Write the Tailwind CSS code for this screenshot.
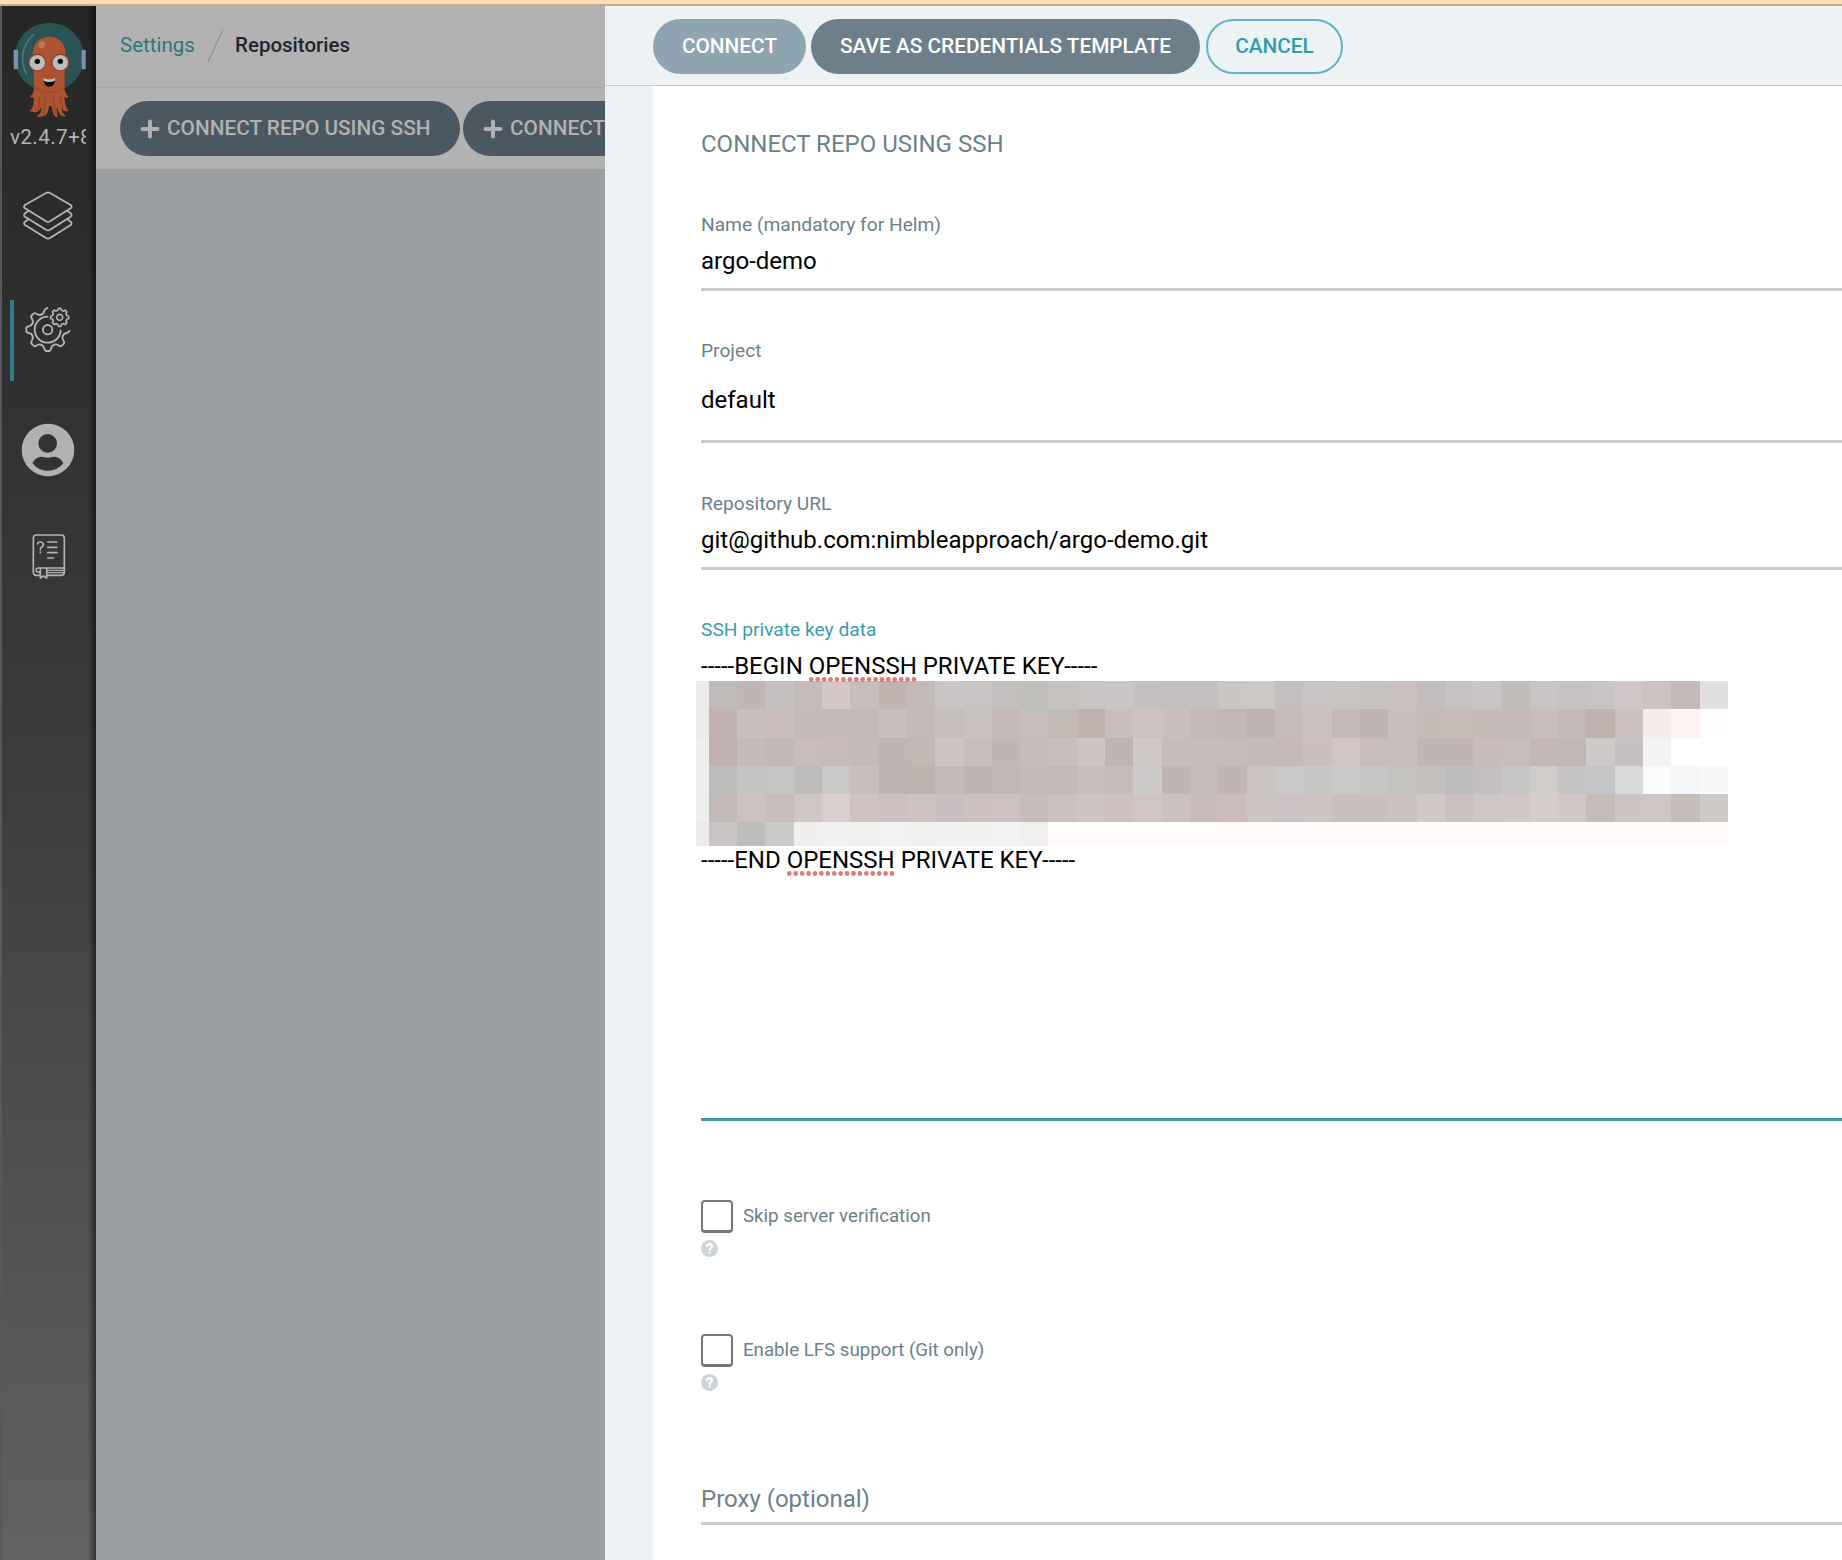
<!DOCTYPE html>
<html lang="en">
<head>
<meta charset="utf-8">
<title>Repositories</title>
<script src="https://cdn.jsdelivr.net/npm/@tailwindcss/browser@4"></script>
</head>
<body class="flex h-[1560px] w-[1842px] flex-col overflow-hidden bg-white font-[Roboto,sans-serif] text-black">
<div class="h-[6px] shrink-0 border-b-2 border-[#c9ad8b] bg-[#ffdeb6]"></div>
<div class="flex min-h-0 flex-1">

  <!-- Sidebar -->
  <nav class="relative flex w-[96px] shrink-0 flex-col border-l-2 border-[#585858] bg-linear-to-b from-[#262626] from-0% via-[#3a3a3a] via-45% to-[#626262] to-100%">
    <svg class="ml-[8px] mt-[14px] h-[100px] w-[80px] shrink-0" viewBox="30 60 240 300">
      <circle cx="148" cy="172" r="104" fill="#2b5254"/>
      <path d="M100 104C65 138 60 180 78 220" fill="none" stroke="#47796f" stroke-width="6" stroke-linecap="round"/>
      <rect x="41" y="149" width="13" height="59" rx="3" fill="#7c93a9"/>
      <rect x="245" y="149" width="12" height="59" rx="3" fill="#7c93a9"/>
      <path d="M98 165C98 130 118 110 148 110C178 110 197 130 197 165L194 225V268C197 280 200 288 206 290C202 295 196 294 193 291C195 308 197 327 207 330C198 338 188 334 184 322C185 333 190 345 199 347C188 353 177 348 171 320C170 334 171 346 175 349C165 354 158 345 155 318H147C145 340 140 354 107 349C122 345 125 330 124 320C120 335 108 341 87 333C98 329 103 310 101 291C98 294 93 294 89 289C97 286 100 280 102 268V225Z" fill="#ac5331"/>
      <path d="M103 260Q148 296 194 260" fill="none" stroke="#9c4529" stroke-width="3"/>
      <path d="M118 290Q120 315 112 332M136 290Q136 330 130 342M160 290Q162 330 168 342M180 290Q182 310 190 325" fill="none" stroke="#8e3f25" stroke-width="3"/>
      <circle cx="126" cy="134" r="10" fill="#c0765e"/>
      <circle cx="112" cy="187" r="27" fill="#963f2a"/><circle cx="181" cy="187" r="27" fill="#963f2a"/>
      <circle cx="112" cy="188" r="23" fill="#bcbcbc"/><circle cx="181" cy="188" r="23" fill="#bcbcbc"/>
      <circle cx="112" cy="184" r="8" fill="#080808"/><circle cx="181" cy="184" r="8" fill="#080808"/>
      <path d="M129 233Q147 243 166 233Q164 260 148 260Q132 260 129 233Z" fill="#120a08"/>
      <path d="M129 233Q147 243 166 233L164 242Q147 250 131 242Z" fill="#c4c4c4"/>
    </svg>
    <div class="ml-[8px] mt-[4px] w-[76px] overflow-hidden whitespace-nowrap text-[20.8px] leading-[26px] tracking-[0.3px] text-[#b3b3b3]">v2.4.7+8</div>
    <svg class="ml-[18px] mt-[40px] h-[52px] w-[56px] shrink-0" viewBox="60 60 168 156" fill="none" stroke="#b4b4b4" stroke-width="5.4" stroke-linejoin="round" stroke-linecap="round">
      <path d="M138 69Q144 66 150 69L212 105Q218 110 212 115L150 154Q144 158 138 154L75 115Q69 110 75 105Z"/>
      <path d="M85 123L75 130Q69 135 75 140L138 179Q144 183 150 179L212 140Q218 135 212 130L203 123"/>
      <path d="M85 148L75 155Q69 160 75 165L138 204Q144 208 150 204L212 165Q218 160 212 155L203 148"/>
    </svg>
    <div class="mt-[58px] flex h-[81px] shrink-0 items-start">
      <div class="ml-[8px] h-[81px] w-[4px] bg-[#2d7c88]"></div>
      <svg class="ml-[8px] mt-[3px] h-[56px] w-[56px]" viewBox="66 400 168 168" fill="none" stroke="#b4b4b4" stroke-width="5.6" stroke-linejoin="round" stroke-linecap="round">
        <defs>
          <path id="cog" d="M-18.8-45.3C-12-48-11-50-10-57Q-9-64-4-64H4Q9-64 10-57C11-50 12-48 18.8-45.3"/>
          <path id="tooth" d="M-8.4-20.3L-5-21.5L-4-27H4L5-21.5L8.4-20.3"/>
        </defs>
        <g transform="translate(143 480)">
          <path d="M-18.8-45.3C-12-48-11-50-10-57Q-8-63-1-65"/>
          <use href="#cog" transform="rotate(-45)"/><use href="#cog" transform="rotate(-90)"/><use href="#cog" transform="rotate(-135)"/><use href="#cog" transform="rotate(180)"/><use href="#cog" transform="rotate(135)"/>
          <path d="M45.3 18.8C48 12 50 11 57 10Q64 8 65 4" />
          <path d="M0-39A39 39 0 1 0 39 3"/>
          <circle r="14"/>
        </g>
        <g transform="translate(179 443)" stroke-width="4.8">
          <use href="#tooth"/><use href="#tooth" transform="rotate(45)"/><use href="#tooth" transform="rotate(90)"/><use href="#tooth" transform="rotate(135)"/><use href="#tooth" transform="rotate(180)"/><use href="#tooth" transform="rotate(225)"/><use href="#tooth" transform="rotate(270)"/><use href="#tooth" transform="rotate(315)"/>
          <circle r="9"/>
        </g>
      </svg>
    </div>
    <svg class="ml-[19px] mt-[42px] h-[54px] w-[54px] shrink-0" viewBox="64 67 162 162">
      <circle cx="145" cy="148" r="79" fill="#b1b1b1"/>
      <circle cx="144" cy="128" r="28" fill="#323232"/>
      <path d="M98 187Q112 165 130 169Q144 173 158 169Q178 165 191 187Q174 210 144 210Q115 210 98 187Z" fill="#323232"/>
    </svg>
    <svg class="ml-[28px] mt-[56px] h-[48px] w-[38px] shrink-0" viewBox="90 400 114 144" fill="none" stroke="#b4b4b4" stroke-width="5" stroke-linejoin="round" stroke-linecap="round">
      <path d="M119 527H109Q100 527 100 517V415Q100 406 109 406H184Q193 406 193 415V518Q193 527 184 527H141"/>
      <path d="M193 505H115Q108 505 108 511Q108 517 115 517H119M141 512H191M141 519H191" stroke-width="4"/>
      <path d="M121 506V535L130 529L140 535V506"/>
      <path d="M113 433Q113 427 121 427Q130 427 130 435Q130 440 124 443Q121 445 121 450M121 457V459M143 427H171M143 443H171M143 459H171M143 475H160"/>
    </svg>
    <div class="absolute inset-y-0 right-0 w-[8px] bg-linear-to-r from-black/0 to-black/50"></div>
  </nav>

  <!-- Dimmed page -->
  <main class="w-[509px] shrink-0 overflow-hidden bg-[#9ba0a4]">
    <header class="flex h-[82px] items-start border-b border-[#a4a7ad] bg-[#b2b2b2] pl-[24px] text-[20.5px]">
      <a class="mt-[27px] w-[75px] leading-6 text-[#2c7680]">Settings</a>
      <svg class="ml-[11px] mt-[22px] h-[36px] w-[18px]" viewBox="0 0 18 36"><path d="M2 34L17 1" stroke="#8d9194" stroke-width="1.2"/></svg>
      <span class="ml-[11px] mt-[27px] font-medium leading-6 text-[#23242f]">Repositories</span>
    </header>
    <div class="flex h-[81px] w-[900px] gap-[3px] bg-[#b2b2b2] pl-[24px] pt-[13px] text-[20.8px] font-medium text-[#b0b2b5]">
      <div class="flex h-[55px] w-[340px] items-center rounded-full bg-[#4c5861] pl-[20px]">
        <svg class="h-[20px] w-[20px]" viewBox="0 0 20 20"><path d="M10 2.5V17.5M2.5 10H17.5" stroke="#b0b2b5" stroke-width="4" stroke-linecap="round"/></svg>
        <span class="ml-[7px] whitespace-nowrap">CONNECT REPO USING SSH</span>
      </div>
      <div class="flex h-[55px] w-[360px] items-center rounded-full bg-[#4c5861] pl-[20px]">
        <svg class="h-[20px] w-[20px]" viewBox="0 0 20 20"><path d="M10 2.5V17.5M2.5 10H17.5" stroke="#b0b2b5" stroke-width="4" stroke-linecap="round"/></svg>
        <span class="ml-[7px] whitespace-nowrap">CONNECT</span>
      </div>
    </div>
  </main>

  <!-- Sliding panel -->
  <section class="flex min-w-0 flex-1 flex-col bg-[#edf2f5]">
    <div class="flex h-[80px] shrink-0 border-b border-[#c3cbd0] pl-[48px] pt-[13px] text-[20.8px] font-medium">
      <button class="h-[55px] w-[153px] rounded-full bg-[#8fa4b1] text-white">CONNECT</button>
      <button class="ml-[5px] h-[55px] w-[389px] rounded-full bg-[#6d7f8b] text-white">SAVE AS CREDENTIALS TEMPLATE</button>
      <button class="ml-[6px] h-[55px] w-[137px] rounded-full border-2 border-[#5cb5c7] text-[#2f9dab]">CANCEL</button>
    </div>
    <form class="ml-[48px] flex flex-1 flex-col bg-white pl-[48px] pt-[44px] text-2xl leading-7">
      <h2 class="text-[#6d7f8b]">CONNECT REPO USING SSH</h2>
      <div class="mt-[55px] h-[78px] border-b-3 border-[#cacaca]">
        <div class="text-[19.2px] leading-6 text-[#6d7f8b]">Name (mandatory for Helm)</div>
        <div class="mt-[10px]">argo-demo</div>
      </div>
      <div class="mt-[48px] h-[104px] border-b-3 border-[#cacaca]">
        <div class="text-[19.2px] leading-6 text-[#6d7f8b]">Project</div>
        <div class="mt-[23px]">default</div>
      </div>
      <div class="mt-[49px] h-[78px] border-b-3 border-[#cacaca]">
        <div class="text-[19.2px] leading-6 text-[#6d7f8b]">Repository URL</div>
        <div class="mt-[10px]">git@github.com:nimbleapproach/argo-demo.git</div>
      </div>
      <div class="mt-[48px] h-[503px] border-b-3 border-[#3a9dac]">
        <div class="text-[19.2px] leading-6 text-[#3a9dac]">SSH private key data</div>
        <div class="mt-[10px]">-----BEGIN <span class="relative">OPENSSH<svg class="absolute left-0 top-[25px] h-[5px] w-[109px]" viewBox="0 0 109 5"><path d="M2.3 2.5H107" stroke="#e07b76" stroke-width="4.8" stroke-linecap="round" stroke-dasharray="0 6.42"/></svg></span> PRIVATE KEY-----</div>
        <div id="mosaic" class="-ml-[5px] mt-px grid h-[165px] w-[1032px] grid-cols-[12.7px_repeat(36,minmax(0,1fr))] grid-rows-[28.3fr_28.3fr_28.3fr_28.3fr_28.3fr_23.5fr]"></div>
        <div>-----END <span class="relative">OPENSSH<svg class="absolute left-0 top-[25px] h-[5px] w-[109px]" viewBox="0 0 109 5"><path d="M2.3 2.5H107" stroke="#e07b76" stroke-width="4.8" stroke-linecap="round" stroke-dasharray="0 6.42"/></svg></span> PRIVATE KEY-----</div>
      </div>
      <div class="mt-[79px] h-[134px] text-[18.7px] text-[#6d7f8b]">
        <div class="flex h-[33px] items-start gap-[10px]"><span class="h-[33px] w-[32px] rounded-[4px] border-2 border-b-3 border-[#767676]"></span><span class="leading-[33px]">Skip server verification</span></div>
        <svg class="mt-[7px] h-[17px] w-[17px]" viewBox="0 0 17 17"><circle cx="8.5" cy="8.5" r="8.5" fill="#ccd4d9"/><path d="M5.8 6.3Q6.4 4.2 8.6 4.2Q11.2 4.3 11.1 6.4Q11 7.6 9.7 8.3Q8.6 8.9 8.6 10M8.6 12.6V12.7" fill="none" stroke="#fff" stroke-width="2.2" stroke-linecap="round"/></svg>
      </div>
      <div class="h-[134px] text-[18.7px] text-[#6d7f8b]">
        <div class="flex h-[33px] items-start gap-[10px]"><span class="h-[33px] w-[32px] rounded-[4px] border-2 border-b-3 border-[#767676]"></span><span class="leading-[33px]">Enable LFS support (Git only)</span></div>
        <svg class="mt-[7px] h-[17px] w-[17px]" viewBox="0 0 17 17"><circle cx="8.5" cy="8.5" r="8.5" fill="#ccd4d9"/><path d="M5.8 6.3Q6.4 4.2 8.6 4.2Q11.2 4.3 11.1 6.4Q11 7.6 9.7 8.3Q8.6 8.9 8.6 10M8.6 12.6V12.7" fill="none" stroke="#fff" stroke-width="2.2" stroke-linecap="round"/></svg>
      </div>
      <div class="mt-[17px] h-[40px] border-b-3 border-[#cacaca] text-[#6d7f8b]">Proxy (optional)</div>
    </form>
  </section>
</div>
<script>
// Redaction tiles covering the key body, one colour per tile, row by row
const rows = [
 'eceaea bfbab7 bfb5b5 c6c1c0 c4bbba d6c8c6 c7bdba c2b3b1 c3b9b6 cac5c5 c8c4c4 c3bfbe c1bfba c6c2bf cac3c3 cbc6c6 c6c1c1 c2bfbe c4c0bf cac6c2 ccc8c3 c4bfbe c9c3c3 c9c5c2 c7c4bf cac0c0 c2bdbc c7c3c3 c9c5c5 c0bcb7 cac5c5 c6c2c2 c8c4c4 d0c8c8 ccc2c0 c4b9b8 e1e0de',
 'ecebeb c0b0af cabfbe cbbdbb c3b9b7 c5bab9 c2b8b7 c8bebe c2b8b5 c6bdbc cac1c0 c3b8b6 c7bdbb c2b8b4 c0b0ae c9bebc cdc2c0 cabebe c3b8b5 c2b7b4 beb2b1 c6bbba ccc1c0 c3b8b7 c0b4b3 c8bebd c6bab7 c7bbb8 c5b9b6 c6bab9 c9bdbc c4b9b8 c1b2af cec0be f6eceb fef2f2 fffcfd',
 'efeeec bfafae c5bab9 c1b7b4 c9bcba c8bab8 c3b9b7 beb4b2 c0b6b2 cec4c1 c8bebc c0b5b4 c5bbb8 c9bebc cec4c1 bfb4b1 cfc8c7 c6bcba c7bcb9 c6bbb8 c4bab8 c5b8b6 ccbebc d1c4c2 c9bcba c8bebc c0b5b2 c1b3b1 c9bbb9 c8bdb9 c4b6b4 c1b6b2 cfcaca c6c1c0 f3f3f3 ffffff ffffff',
 'eeeeec bcbcba c6c4c2 c7c5c3 bebcbb cac8c7 c7bebd bdb3b0 beb3af c4bab9 beb3b2 c0b6b4 c2bab7 c2b8b6 c7bebd c6bdbb cfcaca c0b5b4 c5bbba c0b5b4 ccc4c2 c9c9ca c9c7c5 c9cac7 c8c6c4 c5c3c0 c4c0be bdbcbd c3bfc0 c7c6c7 d0cdcb c5c3c3 c3c5c6 d7d9da f9fcfa f4f6f8 f8f8f8',
 'eeeeec c1b9b7 cbc2c1 c7bdbc cfc7c6 d8cfce cfc2c1 cebfbe cec3c3 cabfc0 cdc0bf cfc1c0 c6bcb9 cdc0c0 d0c4c3 cdc0bf d1c5c4 cdc0c0 c9bbb9 ccbdbc cec4c1 cac2c3 cec4c3 c9c0be c8bfbe cac1c0 d1c9c8 c9c0bf cfc7c5 d1c8c6 d5cbc9 d2c8c7 c5bbb9 cec4c3 cfc6c4 c6bcba cecac6',
 'eceaea cbc5c6 bdbcba cccac9 f1efee f2f0f0 f1f0ef f3f1f1 f0f0ee f2f0f0 f3f1f0 f3f1f1 f2f0ee' + ' fefbfa'.repeat(24)
];
const mosaic = document.getElementById('mosaic');
rows.join(' ').split(' ').forEach(c => {
  const tile = document.createElement('div');
  tile.style.background = '#' + c;
  mosaic.appendChild(tile);
});
</script>
</body>
</html>
